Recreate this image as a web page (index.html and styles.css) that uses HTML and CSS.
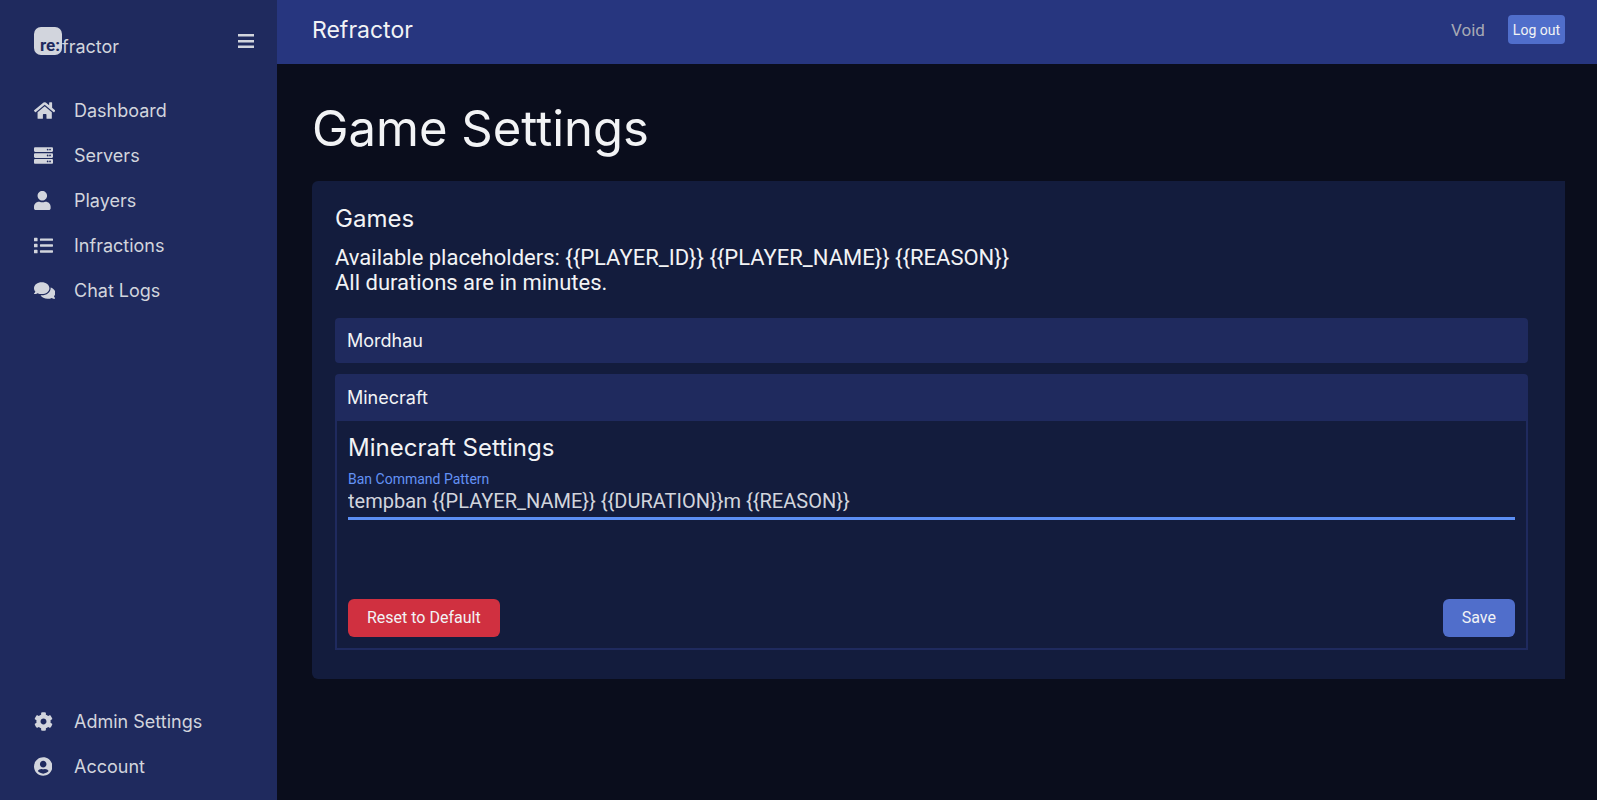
FILE: index.html
```
<!DOCTYPE html>
<html lang="en">
<head>
<meta charset="utf-8">
<meta name="viewport" content="width=device-width, initial-scale=1">
<title>Refractor - Game Settings</title>
<link rel="stylesheet" href="styles.css">
</head>
<body>
<div class="app">
  <aside class="sidebar">
    <div class="brand-row">
      <a class="brand" href="#"><span class="brand-mark">re:</span><span class="brand-name">fractor</span></a>
      <button class="menu-toggle" type="button" aria-label="Toggle menu">
        <svg viewBox="0 0 16 14" width="16" height="14" aria-hidden="true"><path d="M0 0h16v2.500H0zM0 6h16v2.500H0zM0 11.500h16v2.500H0z"/></svg>
      </button>
    </div>
    <nav class="nav" aria-label="Main">
      <a class="nav-link" href="#"><span class="nav-icon"><svg viewBox="0 0 576 512" aria-hidden="true"><path d="M280.37 148.26L96 300.11V464a16 16 0 0 0 16 16l112.06-.29a16 16 0 0 0 15.92-16V368a16 16 0 0 1 16-16h64a16 16 0 0 1 16 16v95.64a16 16 0 0 0 16 16.05L464 480a16 16 0 0 0 16-16V300L295.67 148.26a12.19 12.19 0 0 0-15.3 0zM571.6 251.47L488 182.56V44.05a12 12 0 0 0-12-12h-56a12 12 0 0 0-12 12v72.61L318.47 43a48 48 0 0 0-61 0L4.34 251.47a12 12 0 0 0-1.6 16.9l25.5 31A12 12 0 0 0 45.15 301l235.22-193.74a12.19 12.19 0 0 1 15.3 0L530.9 301a12 12 0 0 0 16.9-1.6l25.5-31a12 12 0 0 0-1.7-16.93z"/></svg></span>Dashboard</a>
      <a class="nav-link" href="#"><span class="nav-icon"><svg viewBox="0 0 512 512" aria-hidden="true"><path d="M480 160H32c-17.673 0-32-14.327-32-32V64c0-17.673 14.327-32 32-32h448c17.673 0 32 14.327 32 32v64c0 17.673-14.327 32-32 32zm-48-88c-13.255 0-24 10.745-24 24s10.745 24 24 24 24-10.745 24-24-10.745-24-24-24zm-64 0c-13.255 0-24 10.745-24 24s10.745 24 24 24 24-10.745 24-24-10.745-24-24-24zm112 248H32c-17.673 0-32-14.327-32-32v-64c0-17.673 14.327-32 32-32h448c17.673 0 32 14.327 32 32v64c0 17.673-14.327 32-32 32zm-48-88c-13.255 0-24 10.745-24 24s10.745 24 24 24 24-10.745 24-24-10.745-24-24-24zm-64 0c-13.255 0-24 10.745-24 24s10.745 24 24 24 24-10.745 24-24-10.745-24-24-24zm112 248H32c-17.673 0-32-14.327-32-32v-64c0-17.673 14.327-32 32-32h448c17.673 0 32 14.327 32 32v64c0 17.673-14.327 32-32 32zm-48-88c-13.255 0-24 10.745-24 24s10.745 24 24 24 24-10.745 24-24-10.745-24-24-24zm-64 0c-13.255 0-24 10.745-24 24s10.745 24 24 24 24-10.745 24-24-10.745-24-24-24z"/></svg></span>Servers</a>
      <a class="nav-link" href="#"><span class="nav-icon"><svg viewBox="0 0 448 512" aria-hidden="true"><path d="M224 256c70.7 0 128-57.300 128-128S294.700 0 224 0 96 57.300 96 128s57.300 128 128 128zm89.600 32h-16.700c-22.200 10.200-46.900 16-72.900 16s-50.600-5.800-72.900-16h-16.700C60.200 288 0 348.200 0 422.400V464c0 26.500 21.500 48 48 48h352c26.500 0 48-21.500 48-48v-41.600c0-74.200-60.200-134.400-134.400-134.400z"/></svg></span>Players</a>
      <a class="nav-link" href="#"><span class="nav-icon"><svg viewBox="0 0 512 512" aria-hidden="true"><path d="M80 368H16a16 16 0 0 0-16 16v64a16 16 0 0 0 16 16h64a16 16 0 0 0 16-16v-64a16 16 0 0 0-16-16zm0-320H16A16 16 0 0 0 0 64v64a16 16 0 0 0 16 16h64a16 16 0 0 0 16-16V64a16 16 0 0 0-16-16zm0 160H16a16 16 0 0 0-16 16v64a16 16 0 0 0 16 16h64a16 16 0 0 0 16-16v-64a16 16 0 0 0-16-16zm416 176H176a16 16 0 0 0-16 16v32a16 16 0 0 0 16 16h320a16 16 0 0 0 16-16v-32a16 16 0 0 0-16-16zm0-320H176a16 16 0 0 0-16 16v32a16 16 0 0 0 16 16h320a16 16 0 0 0 16-16V80a16 16 0 0 0-16-16zm0 160H176a16 16 0 0 0-16 16v32a16 16 0 0 0 16 16h320a16 16 0 0 0 16-16v-32a16 16 0 0 0-16-16z"/></svg></span>Infractions</a>
      <a class="nav-link" href="#"><span class="nav-icon"><svg viewBox="0 0 576 512" aria-hidden="true"><path d="M416 192c0-88.400-93.100-160-208-160S0 103.600 0 192c0 34.300 14.100 65.900 38 92-13.400 30.200-35.500 54.200-35.800 54.500-2.200 2.300-2.800 5.700-1.500 8.700S4.800 352 8 352c36.600 0 66.900-12.300 88.700-25 32.200 15.700 70.300 25 111.300 25 114.900 0 208-71.600 208-160zm122 220c23.900-26 38-57.700 38-92 0-66.900-53.500-124.200-129.300-148.100.9 6.600 1.300 13.300 1.300 20.100 0 105.900-107.700 192-240 192-10.800 0-21.300-.8-31.700-1.900C207.800 439.600 281.800 480 368 480c41 0 79.100-9.200 111.300-25 21.800 12.700 52.100 25 88.700 25 3.200 0 6.100-1.900 7.300-4.800 1.300-2.900.7-6.300-1.500-8.700-.3-.3-22.400-24.200-35.800-54.500z"/></svg></span>Chat Logs</a>
    </nav>
    <nav class="nav nav-bottom" aria-label="Settings">
      <a class="nav-link" href="#"><span class="nav-icon"><svg viewBox="0 0 512 512" aria-hidden="true"><path d="M487.400 315.700l-42.600-24.600c4.300-23.200 4.300-47 0-70.200l42.600-24.600c4.900-2.800 7.100-8.600 5.500-14-11.100-35.600-30-67.800-54.700-94.600-3.800-4.100-10-5.100-14.800-2.300L380.800 110c-17.900-15.400-38.500-27.300-60.800-35.100V25.800c0-5.600-3.900-10.500-9.400-11.700-36.700-8.200-74.300-7.800-109.200 0-5.500 1.200-9.400 6.100-9.400 11.700V75c-22.200 7.900-42.800 19.800-60.800 35.100L88.700 85.500c-4.900-2.800-11-1.900-14.800 2.300-24.700 26.700-43.600 58.900-54.700 94.600-1.700 5.400.6 11.200 5.500 14L67.300 221c-4.300 23.200-4.300 47 0 70.200l-42.600 24.600c-4.900 2.800-7.100 8.600-5.500 14 11.100 35.600 30 67.800 54.700 94.600 3.800 4.100 10 5.100 14.800 2.300l42.600-24.600c17.900 15.400 38.500 27.300 60.800 35.100v49.200c0 5.600 3.900 10.500 9.400 11.700 36.700 8.200 74.300 7.800 109.200 0 5.500-1.200 9.400-6.100 9.400-11.700v-49.200c22.200-7.900 42.800-19.800 60.800-35.100l42.600 24.600c4.900 2.800 11 1.900 14.800-2.300 24.700-26.700 43.600-58.900 54.700-94.600 1.500-5.500-.7-11.300-5.600-14.100zM256 336c-44.100 0-80-35.900-80-80s35.900-80 80-80 80 35.900 80 80-35.900 80-80 80z"/></svg></span>Admin Settings</a>
      <a class="nav-link" href="#"><span class="nav-icon"><svg viewBox="0 0 496 512" aria-hidden="true"><path d="M248 8C111 8 0 119 0 256s111 248 248 248 248-111 248-248S385 8 248 8zm0 96c48.600 0 88 39.400 88 88s-39.400 88-88 88-88-39.400-88-88 39.400-88 88-88zm0 344c-58.700 0-111.300-26.600-146.500-68.200 18.800-35.400 55.600-59.800 98.500-59.800 2.400 0 4.800.4 7.100 1.100 13 4.200 26.600 6.900 40.900 6.900 14.300 0 28-2.700 40.900-6.900 2.300-.7 4.700-1.100 7.100-1.100 42.900 0 79.700 24.400 98.500 59.800C359.300 421.400 306.700 448 248 448z"/></svg></span>Account</a>
    </nav>
  </aside>
  <div class="page">
    <header class="topbar">
      <span class="topbar-title">Refractor</span>
      <div class="user">
        <span class="user-name">Void</span>
        <button class="btn btn-small" type="button">Log out</button>
      </div>
    </header>
    <main class="content">
      <h1 class="page-title">Game Settings</h1>
      <section class="card">
        <h2 class="heading">Games</h2>
        <p class="hint">Available placeholders: {{PLAYER_ID}} {{PLAYER_NAME}} {{REASON}}<br>All durations are in minutes.</p>
        <div class="games">
          <button class="game-toggle" type="button" aria-expanded="false">Mordhau</button>
          <div class="game">
            <button class="game-toggle game-toggle-open" type="button" aria-expanded="true">Minecraft</button>
            <form class="game-body">
              <h2 class="heading">Minecraft Settings</h2>
              <div class="field">
                <label class="field-label" for="ban-pattern">Ban Command Pattern</label>
                <input class="field-input" id="ban-pattern" type="text" value="tempban {{PLAYER_NAME}} {{DURATION}}m {{REASON}}">
              </div>
              <div class="actions">
                <button class="btn btn-danger" type="button">Reset to Default</button>
                <button class="btn" type="button">Save</button>
              </div>
            </form>
          </div>
        </div>
      </section>
    </main>
  </div>
</div>
</body>
</html>
```
FILE: styles.css
```
* { box-sizing: border-box; }

body {
  margin: 0;
  background: #0a0d1c;
  color: #f2f3f5;
  font-family: Inter, "Liberation Sans", sans-serif;
  font-weight: 400;
}

button, input { font: inherit; color: inherit; }

h1, h2, p { margin: 0; font-weight: inherit; }

.app { display: flex; min-height: 100vh; }

.sidebar {
  display: flex;
  flex-direction: column;
  flex: 0 0 277px;
  padding: 24px 23px 11px 34px;
  background: #1f2a5e;
  color: #d2d5dd;
}

.brand-row {
  display: flex;
  align-items: center;
  justify-content: space-between;
  height: 34px;
  margin-bottom: 30px;
}

.brand {
  display: flex;
  align-items: flex-start;
  padding-top: 2px;
  color: inherit;
  text-decoration: none;
  font-size: 18px;
}

.brand-mark {
  width: 28px;
  height: 28px;
  padding: 8px 2px 0 0;
  border-radius: 7px;
  background: #d2d5dd;
  color: #1f2a5e;
  font: 700 17px/20px Roboto, sans-serif;
  text-align: right;
}

.brand-name { padding-top: 10px; line-height: 20px; }

.menu-toggle {
  display: flex;
  padding: 0;
  border: 0;
  background: none;
  fill: currentColor;
}

.nav { display: flex; flex-direction: column; }
.nav-bottom { margin-top: auto; }

.nav-link {
  display: flex;
  align-items: center;
  height: 45px;
  color: inherit;
  text-decoration: none;
  font-size: 18px;
}

.nav-icon { display: flex; flex: 0 0 40px; }
.nav-icon svg { height: 19px; fill: currentColor; }

.page { flex: 1; min-width: 0; }

.topbar {
  display: flex;
  align-items: flex-start;
  justify-content: space-between;
  height: 64px;
  padding: 15px 32px 0 35px;
  background: #27367f;
}

.topbar-title {
  font-size: 23px;
  line-height: 30px;
}

.user { display: flex; align-items: center; gap: 23px; }

.user-name {
  color: #a6a9b4;
  font: 400 17px/20px Roboto, sans-serif;
}

.content { padding: 35px 32px 35px 35px; }

.page-title {
  margin-bottom: 22px;
  font-size: 49px;
  line-height: 60px;
}

.card {
  padding: 23px 37px 29px 23px;
  border-radius: 6px 0 0 6px;
  background: #131c3d;
}

.heading {
  font-size: 24px;
  line-height: 30px;
}

.hint {
  margin: 11px 0 23px;
  font: 400 22px/25px Roboto, sans-serif;
}

.games { display: flex; flex-direction: column; gap: 11px; }

.game-toggle {
  display: block;
  width: 100%;
  height: 45px;
  padding: 0 12px;
  border: 0;
  border-radius: 4px;
  background: #1f2a5e;
  text-align: left;
  font-size: 18px;
}

.game-toggle-open { height: 47px; border-radius: 4px 4px 0 0; }

.game-body {
  padding: 12px 11px 11px;
  border: 2px solid #1f2a5e;
  border-top: 0;
}

.field { display: flex; flex-direction: column; margin-top: 7px; }

.field-label {
  color: #6392f5;
  font: 400 14px/18px Roboto, sans-serif;
}

.field-input {
  width: 100%;
  height: 32px;
  padding: 0 0 3px;
  border: 0;
  border-bottom: 3px solid #5c8ff5;
  border-radius: 0;
  outline: 0;
  background: none;
  color: #d2d5dd;
  font: 400 20px/26px Roboto, sans-serif;
}

.actions {
  display: flex;
  justify-content: space-between;
  margin-top: 79px;
}

.btn {
  height: 38px;
  padding: 0 19px;
  border: 0;
  border-radius: 6px;
  background: #506ecb;
  font: 400 16px/20px Roboto, sans-serif;
}

.btn-danger { background: #d03040; }

.btn-small {
  height: 29px;
  padding: 0 5px;
  border-radius: 4px;
  font-size: 14px;
}
```
